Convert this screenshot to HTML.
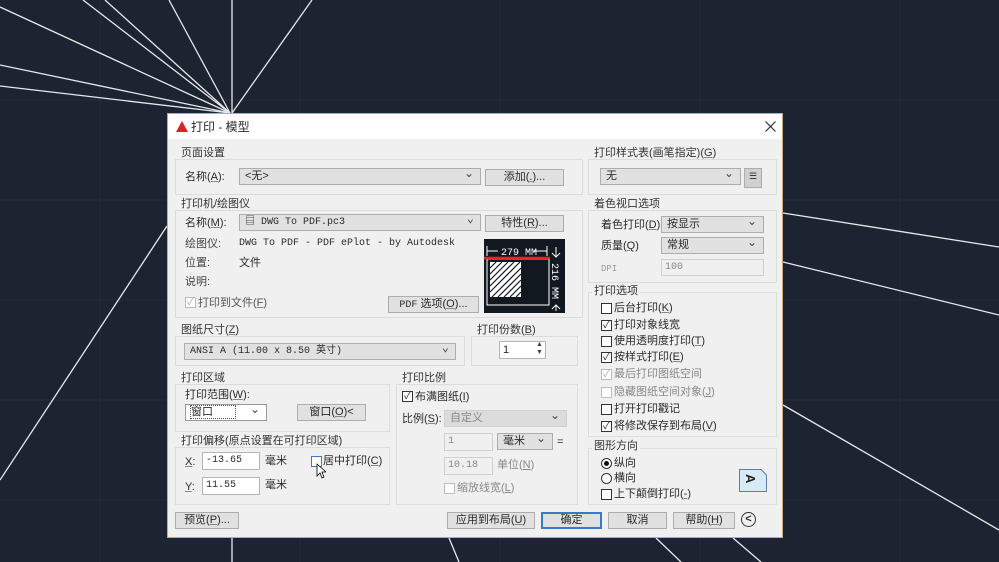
<!DOCTYPE html>
<html><head><meta charset="utf-8"><style>
*{box-sizing:border-box;margin:0;padding:0}
body{width:999px;height:562px;overflow:hidden;background:#1d2431;position:relative;font-family:"Liberation Sans","Noto Sans CJK SC",sans-serif;font-size:11px;color:#2a2a2a}
u{text-decoration-color:#888}
.a{position:absolute;white-space:nowrap;line-height:14px}
.dlg{position:absolute;left:167px;top:113px;width:616px;height:425px;background:#f0f0f0;border:1px solid #c9a77a}
.title{position:absolute;left:0;top:0;width:614px;height:25px;background:#fff}
.g{position:absolute;border:1px solid #dcdcdc}
.gl{position:absolute;background:#f0f0f0;padding:0 2px;line-height:12px;color:#333}
.cb{position:absolute;height:17px;background:#e1e1e1;border:1px solid #adadad;padding-left:5px;line-height:15px}
.cb:after{content:"⌄";position:absolute;right:6px;top:-3px;font-size:12px;color:#444}
.bt{position:absolute;height:17px;background:#e1e1e1;border:1px solid #adadad;text-align:center;line-height:15px}
.in{position:absolute;height:18px;background:#fff;border:1px solid #b5b5b5;padding-left:3px;line-height:16px}
.dis{background:#f0f0f0;border-color:#d0d0d0;color:#888}
.ck{position:absolute;width:11px;height:11px;border:1px solid #333;background:#fff;font-size:10px;line-height:9px;text-align:center}
.ckd{border-color:#bbb;color:#aaa}
.mono{font-family:"Liberation Mono","Noto Sans CJK SC",monospace;font-size:10px}
</style></head><body>
<svg width="999" height="562" style="position:absolute;left:0;top:0" stroke="#e6e8ea" stroke-width="1.3">
<g stroke="#242b38" stroke-width="1">
<line x1="0" y1="100" x2="999" y2="100"/><line x1="0" y1="200" x2="999" y2="200"/><line x1="0" y1="300" x2="999" y2="300"/><line x1="0" y1="400" x2="999" y2="400"/><line x1="0" y1="500" x2="999" y2="500"/>
<line x1="100" y1="0" x2="100" y2="562"/><line x1="300" y1="0" x2="300" y2="562"/><line x1="500" y1="0" x2="500" y2="562"/><line x1="700" y1="0" x2="700" y2="562"/><line x1="900" y1="0" x2="900" y2="562"/>
</g>
<line x1="0" y1="7" x2="230" y2="113"/><line x1="83" y1="0" x2="230" y2="113"/><line x1="105" y1="0" x2="230" y2="113"/><line x1="169" y1="0" x2="230" y2="113"/><line x1="232" y1="0" x2="232" y2="113"/><line x1="312" y1="0" x2="232" y2="113"/><line x1="0" y1="65" x2="230" y2="113"/><line x1="0" y1="86" x2="230" y2="113"/>
<line x1="167" y1="226" x2="0" y2="480"/>
<line x1="783" y1="213" x2="999" y2="247"/><line x1="783" y1="262" x2="999" y2="315"/><line x1="783" y1="405" x2="999" y2="530"/>
<line x1="232" y1="538" x2="232" y2="562"/><line x1="449" y1="538" x2="459" y2="562"/><line x1="656" y1="538" x2="681" y2="562"/><line x1="733" y1="538" x2="761" y2="562"/>
</svg>
<div class="dlg">
<div class="title"></div>
<svg class="a" style="left:8px;top:7px" width="12" height="11"><path d="M6 0L12 11H0Z" fill="#d22"/></svg>
<div class="a" style="left:23px;top:6px;font-size:12px">打印 - 模型</div>
<svg class="a" style="left:597px;top:7px" width="11" height="11"><path d="M0.5 0.5L10.5 10.5M10.5 0.5L0.5 10.5" stroke="#333" stroke-width="1.2"/></svg>
</div>
<div style="position:absolute;left:0;top:0">
<div class="g" style="left:175px;top:159px;width:408px;height:36px"></div><div class="gl a" style="left:179px;top:147px">页面设置</div>
<div class="a" style="left:185px;top:170px">名称(<u>A</u>):</div>
<div class="cb" style="left:239px;top:168px;width:242px">&lt;无&gt;</div>
<div class="bt" style="left:485px;top:169px;width:79px">添加(<u>.</u>)...</div>
<div class="g" style="left:175px;top:210px;width:408px;height:108px"></div><div class="gl a" style="left:179px;top:198px">打印机/绘图仪</div>
<div class="a" style="left:185px;top:216px">名称(<u>M</u>):</div>
<div class="cb mono" style="left:239px;top:214px;width:242px">▤ DWG To PDF.pc3</div>
<div class="bt" style="left:485px;top:215px;width:79px">特性(<u>R</u>)...</div>
<div class="a" style="left:185px;top:237px;color:#444">绘图仪:</div><div class="a mono" style="left:239px;top:237px">DWG To PDF - PDF ePlot - by Autodesk</div>
<div class="a" style="left:185px;top:256px;color:#444">位置:</div><div class="a" style="left:239px;top:256px">文件</div>
<div class="a" style="left:185px;top:275px;color:#444">说明:</div>
<div class="ck ckd" style="left:185px;top:297px">✓</div><div class="a" style="left:198px;top:296px;color:#555">打印到文件(<u>F</u>)</div>
<div class="bt" style="left:388px;top:296px;width:91px"><span class="mono">PDF</span> 选项(<u>O</u>)...</div>
<svg class="a" style="left:484px;top:239px" width="81" height="74"><rect width="81" height="74" fill="#111820"/>
<rect x="3" y="20" width="62" height="46" fill="none" stroke="#fff"/>
<rect x="6" y="23" width="31" height="35" fill="#fff"/>
<g stroke="#111820" stroke-width="1.2"><path d="M6 29L12 23M6 35L18 23M6 41L24 23M6 47L30 23M6 53L36 23M8 58L37 29M14 58L37 35M20 58L37 41M26 58L37 47M32 58L37 53"/></g>
<line x1="0" y1="19" x2="66" y2="19" stroke="#e22" stroke-width="2.5"/>
<path d="M3 7V17M63 7V17M3 12H14M50 12H63M72 8V18M68 14L72 18L76 14M72 72V66M68 70L72 66L76 70" stroke="#fff"/>
<text x="17" y="16" fill="#fff" font-size="10" font-family="Liberation Mono">279 MM</text>
<text transform="translate(68,24) rotate(90)" fill="#fff" font-size="10" font-family="Liberation Mono">216 MM</text>
</svg>
<div class="g" style="left:175px;top:336px;width:290px;height:30px"></div><div class="gl a" style="left:179px;top:324px">图纸尺寸(<u>Z</u>)</div>
<div class="cb mono" style="left:184px;top:343px;width:272px">ANSI A (11.00 x 8.50 英寸)</div>
<div class="g" style="left:471px;top:336px;width:107px;height:30px"></div><div class="gl a" style="left:475px;top:324px">打印份数(<u>B</u>)</div>
<div class="in" style="left:499px;top:341px;width:47px">1</div><div class="a" style="left:536px;top:341px;font-size:7px;line-height:8px;color:#444">▲<br>▼</div>
<div class="g" style="left:175px;top:384px;width:215px;height:48px"></div><div class="gl a" style="left:179px;top:372px">打印区域</div>
<div class="a" style="left:185px;top:388px">打印范围(<u>W</u>):</div>
<div class="cb" style="left:185px;top:404px;width:82px;background:#fff;border-color:#999"><span style="outline:1px dotted #555;padding-right:22px">窗口</span></div>
<div class="bt" style="left:297px;top:404px;width:69px">窗口(<u>O</u>)&lt;</div>
<div class="g" style="left:175px;top:447px;width:215px;height:58px"></div><div class="gl a" style="left:179px;top:435px">打印偏移(原点设置在可打印区域)</div>
<div class="a" style="left:185px;top:455px"><u>X</u>:</div><div class="in mono" style="left:202px;top:452px;width:58px">-13.65</div><div class="a" style="left:265px;top:454px">毫米</div>
<div class="ck" style="left:311px;top:456px;border-color:#3a78c8"></div><div class="a" style="left:323px;top:454px">居中打印(<u>C</u>)</div>
<svg class="a" style="left:316px;top:463px" width="10" height="16"><path d="M1 1V13L4 10L6 15L8 14L6 9H10Z" fill="#fff" stroke="#000" stroke-width="0.8"/></svg>
<div class="a" style="left:185px;top:480px"><u>Y</u>:</div><div class="in mono" style="left:202px;top:477px;width:58px">11.55</div><div class="a" style="left:265px;top:478px">毫米</div>
<div class="g" style="left:396px;top:384px;width:182px;height:121px"></div><div class="gl a" style="left:400px;top:372px">打印比例</div>
<div class="ck" style="left:402px;top:391px">✓</div><div class="a" style="left:415px;top:390px">布满图纸(<u>I</u>)</div>
<div class="a" style="left:402px;top:412px">比例(<u>S</u>):</div>
<div class="cb dis" style="left:444px;top:410px;width:123px;background:#dcdcdc">自定义</div>
<div class="in dis mono" style="left:444px;top:433px;width:49px">1</div>
<div class="cb" style="left:497px;top:433px;width:56px">毫米</div><div class="a" style="left:557px;top:435px">=</div>
<div class="in dis mono" style="left:444px;top:457px;width:49px">10.18</div><div class="a" style="left:497px;top:458px;color:#888">单位(<u>N</u>)</div>
<div class="ck ckd" style="left:444px;top:483px"></div><div class="a" style="left:457px;top:481px;color:#888">缩放线宽(<u>L</u>)</div>
<div class="bt" style="left:175px;top:512px;width:64px">预览(<u>P</u>)...</div>
<div class="bt" style="left:447px;top:512px;width:88px">应用到布局(<u>U</u>)</div>
<div class="bt" style="left:541px;top:512px;width:61px;border:2px solid #3a78c8;line-height:13px">确定</div>
<div class="bt" style="left:608px;top:512px;width:59px">取消</div>
<div class="bt" style="left:673px;top:512px;width:62px">帮助(<u>H</u>)</div>
<div class="a" style="left:741px;top:512px;width:15px;height:15px;border:1.5px solid #333;border-radius:50%;text-align:center;line-height:12px;font-weight:bold;font-size:11px">&lt;</div>
<div class="g" style="left:588px;top:159px;width:189px;height:36px"></div><div class="gl a" style="left:592px;top:147px">打印样式表(画笔指定)(<u>G</u>)</div>
<div class="cb" style="left:600px;top:168px;width:141px">无</div>
<div class="bt" style="left:744px;top:168px;width:18px;height:20px;background:#d0d0d0;font-size:9px">☰</div>
<div class="g" style="left:588px;top:210px;width:189px;height:73px"></div><div class="gl a" style="left:592px;top:198px">着色视口选项</div>
<div class="a" style="left:601px;top:218px">着色打印(<u>D</u>)</div><div class="cb" style="left:661px;top:216px;width:103px">按显示</div>
<div class="a" style="left:601px;top:239px">质量(<u>Q</u>)</div><div class="cb" style="left:661px;top:237px;width:103px">常规</div>
<div class="a mono" style="left:601px;top:262px;color:#999;font-size:9px">DPI</div><div class="in dis mono" style="left:661px;top:259px;width:103px;height:17px">100</div>
<div class="g" style="left:588px;top:292px;width:189px;height:145px"></div><div class="gl a" style="left:592px;top:285px">打印选项</div>
<div class="ck" style="left:601px;top:303px"></div><div class="a" style="left:614px;top:301px">后台打印(<u>K</u>)</div>
<div class="ck" style="left:601px;top:320px">✓</div><div class="a" style="left:614px;top:318px">打印对象线宽</div>
<div class="ck" style="left:601px;top:336px"></div><div class="a" style="left:614px;top:334px">使用透明度打印(<u>T</u>)</div>
<div class="ck" style="left:601px;top:352px">✓</div><div class="a" style="left:614px;top:350px">按样式打印(<u>E</u>)</div>
<div class="ck ckd" style="left:601px;top:369px">✓</div><div class="a" style="left:614px;top:367px;color:#888">最后打印图纸空间</div>
<div class="ck ckd" style="left:601px;top:387px"></div><div class="a" style="left:614px;top:385px;color:#888">隐藏图纸空间对象(<u>J</u>)</div>
<div class="ck" style="left:601px;top:404px"></div><div class="a" style="left:614px;top:402px">打开打印戳记</div>
<div class="ck" style="left:601px;top:421px">✓</div><div class="a" style="left:614px;top:419px">将修改保存到布局(<u>V</u>)</div>
<div class="g" style="left:588px;top:448px;width:189px;height:57px"></div><div class="gl a" style="left:592px;top:440px">图形方向</div>
<div class="a" style="left:601px;top:458px;width:11px;height:11px;border:1px solid #333;border-radius:50%;background:#fff"><div style="margin:2px;width:5px;height:5px;border-radius:50%;background:#111"></div></div><div class="a" style="left:614px;top:456px">纵向</div>
<div class="a" style="left:601px;top:473px;width:11px;height:11px;border:1px solid #333;border-radius:50%;background:#fff"></div><div class="a" style="left:614px;top:471px">横向</div>
<div class="ck" style="left:601px;top:489px"></div><div class="a" style="left:614px;top:487px">上下颠倒打印(<u>-</u>)</div>
<svg class="a" style="left:739px;top:469px" width="28" height="23"><path d="M0.5 0.5H22L27.5 6V22.5H0.5Z" fill="#d8eaf8" stroke="#5a7fa8"/><text x="7" y="17" font-size="13" font-weight="bold" fill="#222" transform="rotate(90 13 11)" font-family="Liberation Sans">A</text></svg>
</div>
</body></html>
